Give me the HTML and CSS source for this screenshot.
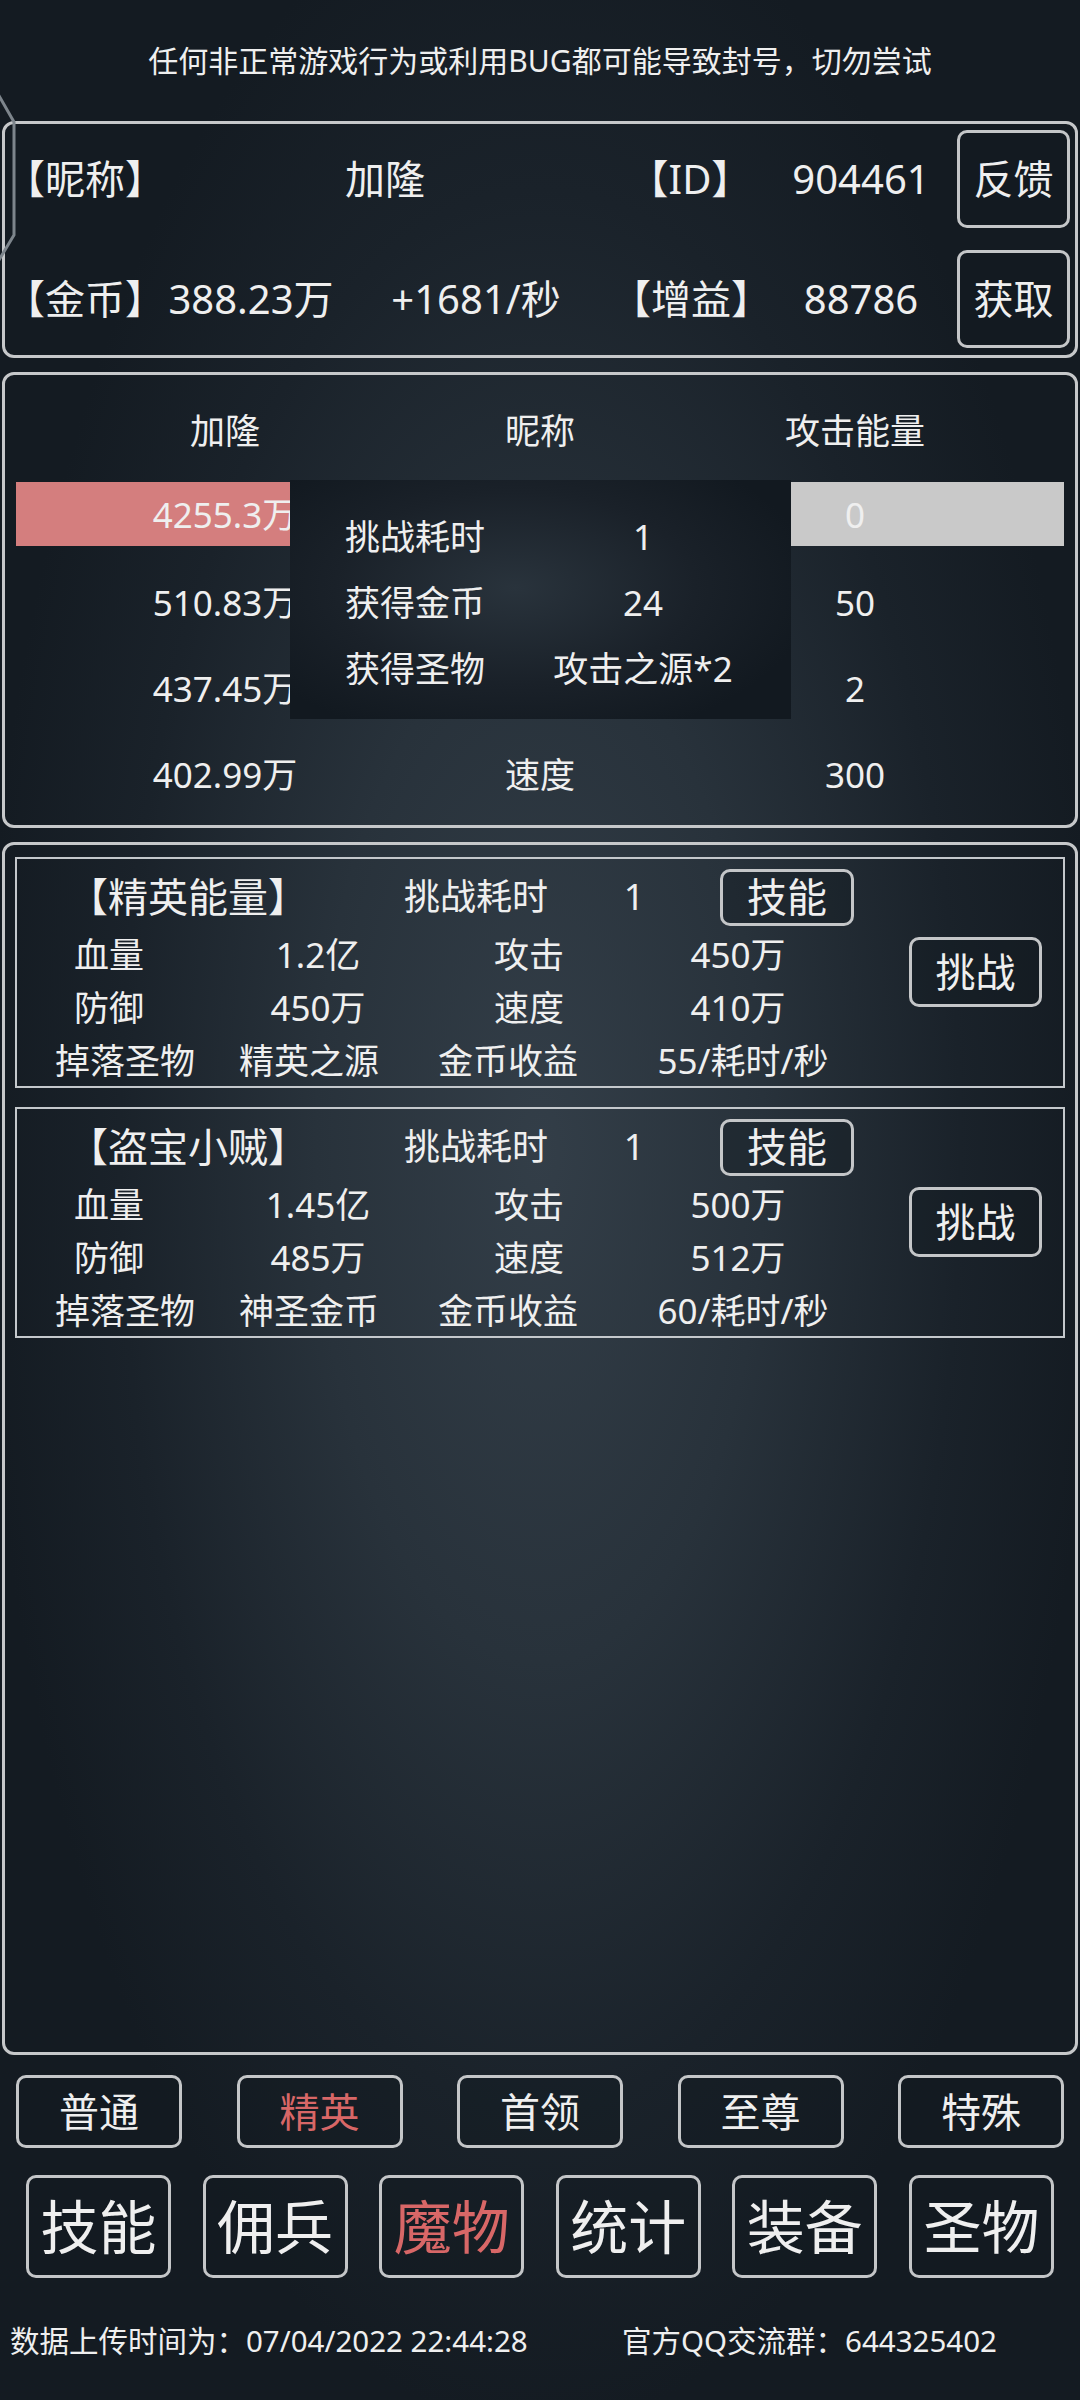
FILE: index.html
```html
<!DOCTYPE html>
<html lang="zh-CN">
<head>
<meta charset="utf-8">
<title>魔物</title>
<link rel="stylesheet" href="styles.css">
</head>
<body>
<div class="page">
  <svg class="deco" width="24" height="200" viewBox="0 0 24 200">
    <path d="M -10 0 L 14 42 L 14 155 L -10 195" fill="none" stroke="#7d858c" stroke-width="3" stroke-linejoin="round"/>
  </svg>

  <div class="notice">任何非正常游戏行为或利用BUG都可能导致封号，切勿尝试</div>

  <section class="info">
    <div class="info-row r1">
      <span class="ic w150">【昵称】</span>
      <span class="ic w460">加隆</span>
      <span class="ic w150">【ID】</span>
      <span class="ic w192">904461</span>
      <button class="btn btn-info">反馈</button>
    </div>
    <div class="info-row r2">
      <span class="ic w150">【金币】</span>
      <span class="ic w192">388.23万</span>
      <span class="ic w258">+1681/秒</span>
      <span class="ic w172">【增益】</span>
      <span class="ic w168">88786</span>
      <button class="btn btn-info sp">获取</button>
    </div>
  </section>

  <section class="battle">
    <div class="b-row">
      <div class="b-grid"><span>加隆</span><span>昵称</span><span>攻击能量</span></div>
    </div>
    <div class="b-row">
      <div class="b-bar">
        <div class="b-grid"><span>4255.3万</span><span></span><span>0</span></div>
      </div>
    </div>
    <div class="b-row">
      <div class="b-grid"><span>510.83万</span><span></span><span>50</span></div>
    </div>
    <div class="b-row">
      <div class="b-grid"><span>437.45万</span><span></span><span>2</span></div>
    </div>
    <div class="b-row">
      <div class="b-grid"><span>402.99万</span><span>速度</span><span>300</span></div>
    </div>

    <div class="tip">
      <div class="tip-row"><span class="tip-k">挑战耗时</span><span class="tip-v">1</span></div>
      <div class="tip-row"><span class="tip-k">获得金币</span><span class="tip-v">24</span></div>
      <div class="tip-row"><span class="tip-k">获得圣物</span><span class="tip-v">攻击之源*2</span></div>
    </div>
  </section>

  <section class="list">
    <div class="card">
      <div class="card-main">
        <div class="card-title">
          <span class="t-name">【精英能量】</span>
          <span class="t-label">挑战耗时</span>
          <span class="t-num">1</span>
          <button class="btn btn-skill">技能</button>
        </div>
        <div class="card-row stats"><span>血量</span><span>1.2亿</span><span>攻击</span><span>450万</span></div>
        <div class="card-row stats"><span>防御</span><span>450万</span><span>速度</span><span>410万</span></div>
        <div class="card-row drop"><span>掉落圣物</span><span>精英之源</span><span>金币收益</span><span>55/耗时/秒</span></div>
      </div>
      <div class="card-side"><button class="btn btn-fight">挑战</button></div>
    </div>

    <div class="card">
      <div class="card-main">
        <div class="card-title">
          <span class="t-name">【盗宝小贼】</span>
          <span class="t-label">挑战耗时</span>
          <span class="t-num">1</span>
          <button class="btn btn-skill">技能</button>
        </div>
        <div class="card-row stats"><span>血量</span><span>1.45亿</span><span>攻击</span><span>500万</span></div>
        <div class="card-row stats"><span>防御</span><span>485万</span><span>速度</span><span>512万</span></div>
        <div class="card-row drop"><span>掉落圣物</span><span>神圣金币</span><span>金币收益</span><span>60/耗时/秒</span></div>
      </div>
      <div class="card-side"><button class="btn btn-fight">挑战</button></div>
    </div>
  </section>

  <nav class="tabs">
    <button class="btn tab">普通</button>
    <button class="btn tab active">精英</button>
    <button class="btn tab">首领</button>
    <button class="btn tab">至尊</button>
    <button class="btn tab">特殊</button>
  </nav>

  <nav class="menu">
    <button class="btn menu-btn">技能</button>
    <button class="btn menu-btn">佣兵</button>
    <button class="btn menu-btn active">魔物</button>
    <button class="btn menu-btn">统计</button>
    <button class="btn menu-btn">装备</button>
    <button class="btn menu-btn">圣物</button>
  </nav>

  <footer class="foot">
    <span class="foot-l">数据上传时间为：07/04/2022 22:44:28</span>
    <span class="foot-r">官方QQ交流群：644325402</span>
  </footer>
</div>
</body>
</html>
```

FILE: styles.css
```css
html, body {
  margin: 0;
  padding: 0;
}

body {
  width: 1080px;
  height: 2400px;
  overflow: hidden;
  background: #141b22;
  font-family: "Noto Sans", "Noto Sans CJK SC", sans-serif;
  color: #efefef;
}

.page {
  position: relative;
  width: 1080px;
  height: 2400px;
  background: radial-gradient(ellipse 560px 1280px at 540px 1150px, #333e48 0%, #28323b 40%, #1a222a 75%, #141b22 100%);
}

.deco {
  position: absolute;
  left: 0;
  top: 80px;
}

.notice {
  height: 121px;
  display: flex;
  align-items: center;
  justify-content: center;
  font-size: 30px;
  line-height: 1;
}

.btn {
  font-family: inherit;
  color: #efefef;
  background: rgba(18, 25, 32, 0.35);
  border: 3px solid #c4c6c8;
  border-radius: 10px;
  padding: 0;
  margin: 0;
  line-height: 1;
  box-sizing: border-box;
  display: flex;
  align-items: center;
  justify-content: center;
}

/* info panel */
.info {
  margin: 0 2px;
  height: 237px;
  box-sizing: border-box;
  border: 3px solid #c6c8ca;
  border-radius: 12px;
  padding: 6px 0 7px 0;
  display: flex;
  flex-direction: column;
  gap: 22px;
}

.info-row {
  height: 98px;
  display: flex;
  align-items: center;
  font-size: 40px;
  line-height: 1;
}

.ic {
  text-align: center;
  white-space: nowrap;
}

.w150 { width: 150px; }
.w460 { width: 460px; }
.w192 { width: 192px; }
.w258 { width: 258px; }
.w172 { width: 172px; }
.w168 { width: 168px; }

.btn-info {
  width: 113px;
  height: 98px;
  font-size: 40px;
}

.btn-info.sp {
  margin-left: 12px;
}

/* battle panel */
.battle {
  position: relative;
  margin: 14px 2px 0 2px;
  height: 456px;
  box-sizing: border-box;
  border: 3px solid #c6c8ca;
  border-radius: 12px;
  padding: 12px 0 8px 0;
}

.b-row {
  height: 86px;
  display: flex;
  align-items: center;
  justify-content: center;
}

.b-grid {
  display: grid;
  grid-template-columns: 315px 315px 315px;
  font-size: 35px;
  line-height: 1;
}

.b-grid span {
  text-align: center;
  white-space: nowrap;
}

.b-bar {
  width: 1048px;
  height: 64px;
  margin-top: -4px;
  display: flex;
  align-items: center;
  justify-content: center;
  background: linear-gradient(to right, #d47e7e 0%, #d47e7e 50%, #c9c9c9 50%, #c9c9c9 100%);
}

.tip {
  position: absolute;
  left: 285px;
  top: 105px;
  width: 501px;
  height: 239px;
  box-sizing: border-box;
  padding: 23px 0 18px 55px;
  background: radial-gradient(ellipse 300px 160px at 45% 45%, #29333c 0%, #1a2129 60%, #121920 100%);
}

.tip-row {
  height: 66px;
  display: grid;
  grid-template-columns: 185px 226px;
  align-items: center;
  font-size: 35px;
  line-height: 1;
}

.tip-v {
  text-align: center;
  white-space: nowrap;
}

/* list panel */
.list {
  margin: 14px 2px 0 2px;
  height: 1213px;
  box-sizing: border-box;
  border: 3px solid #c6c8ca;
  border-radius: 12px;
  padding: 12px 10px 0 10px;
  display: flex;
  flex-direction: column;
  gap: 19px;
}

.card {
  height: 231px;
  box-sizing: border-box;
  border: 2px solid #c4c8cc;
  display: flex;
}

.card-main {
  width: 839px;
  padding-top: 10px;
}

.card-title {
  height: 56px;
  display: flex;
  align-items: center;
  line-height: 1;
  margin-bottom: 3px;
}

.t-name {
  width: 342px;
  text-align: center;
  font-size: 40px;
}

.t-label {
  width: 234px;
  text-align: center;
  font-size: 36px;
}

.t-num {
  width: 82px;
  text-align: center;
  font-size: 36px;
}

.btn-skill {
  margin-left: 45px;
  width: 134px;
  height: 57px;
  font-size: 40px;
}

.card-row {
  height: 53px;
  display: grid;
  align-items: center;
  font-size: 35px;
  line-height: 1;
}

.card-row span {
  text-align: center;
  white-space: nowrap;
}

.card-row.stats {
  grid-template-columns: 184px 234px 188px 230px;
}

.card-row.drop {
  grid-template-columns: 216px 152px 246px 224px;
}

.card-side {
  padding: 78px 0 0 53px;
}

.btn-fight {
  width: 133px;
  height: 70px;
  font-size: 40px;
}

/* tabs */
.tabs {
  margin-top: 20px;
  padding: 0 16px;
  height: 73px;
  display: flex;
  justify-content: space-between;
}

.tab {
  width: 166px;
  height: 73px;
  font-size: 40px;
}

.active {
  color: #d86767;
}

.menu {
  margin-top: 27px;
  padding: 0 26px;
  height: 103px;
  display: flex;
  justify-content: space-between;
}

.menu-btn {
  width: 145px;
  height: 103px;
  font-size: 58px;
}

/* footer */
.foot {
  margin-top: 40px;
  height: 46px;
  display: flex;
  align-items: center;
  font-size: 29.5px;
  line-height: 1;
  white-space: nowrap;
}

.foot-l {
  width: 612px;
  padding-left: 10px;
}
```
